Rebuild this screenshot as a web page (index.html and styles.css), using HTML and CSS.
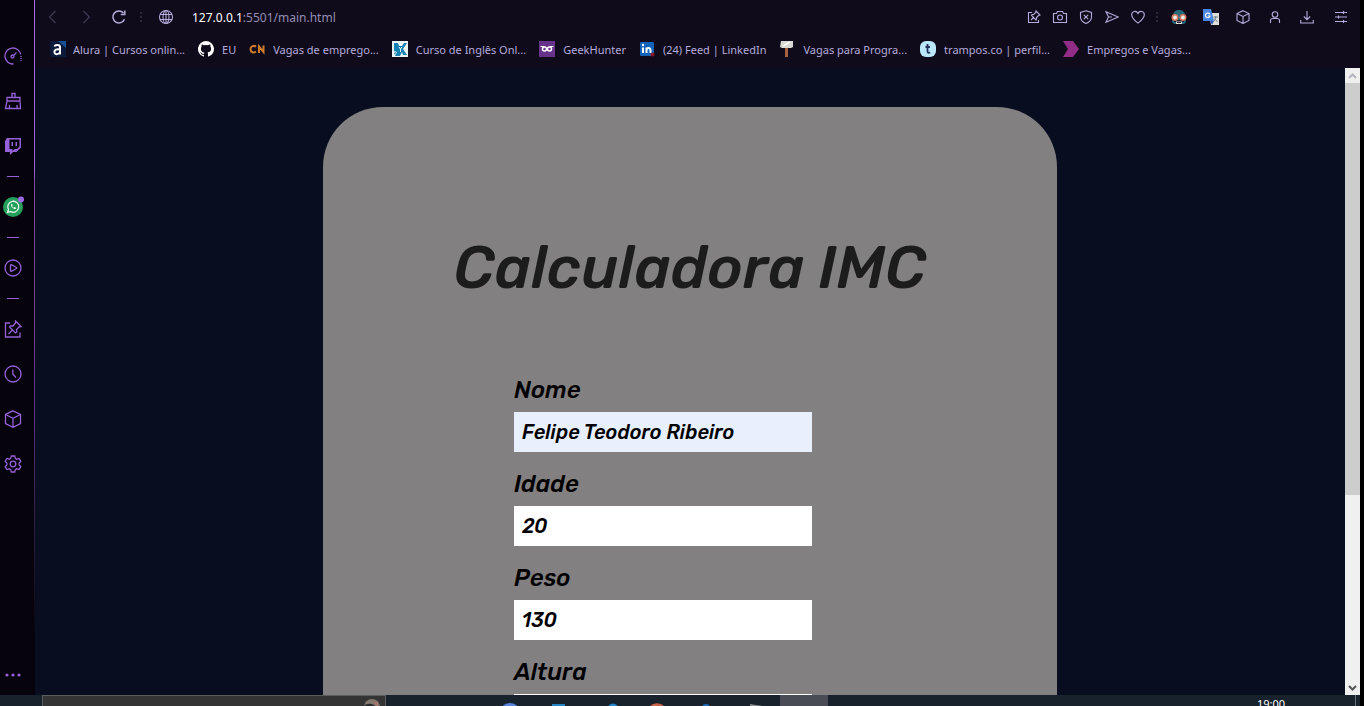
FILE: index.html
```html
<!DOCTYPE html>
<html lang="pt-BR">
<head>
<meta charset="utf-8">
<title>Calculadora IMC</title>
<link rel="stylesheet" href="styles.css">
</head>
<body>
<div class="screen">
  <div class="browser">
    <aside class="sidebar" aria-label="Barra lateral">
      <button class="side-btn" aria-label="Controle"><svg class="line" width="18" height="18" viewBox="0 0 18 18"><path d="M9.500 17A8 8 0 1 1 16.800 7.500"/><circle cx="8.500" cy="9.500" r="1.500"/><path d="M9.600 8.400L12.500 5.500"/><path d="M17 9v5" stroke-dasharray="1 1"/></svg></button>
      <button class="side-btn" aria-label="Limpeza"><svg class="line" width="18" height="18" viewBox="0 0 18 18"><path d="M3 5.500h13v3.500H3zM8 5.500v-4h3v4M3 9L1.500 16.500h15L16 9M5.500 13v3.500M13 13v3.500"/></svg></button>
      <button class="side-btn" aria-label="Twitch"><svg width="18" height="18" viewBox="0 0 18 18"><path fill="#9561d8" fill-rule="evenodd" d="M3 1h14v9.500L12.500 15H9l-3 3v-3H1V4zM5.500 2.500V12h3v2l2-2h2.500l2.500-2.500v-7zM7.500 5h1.500v4H7.500zM11.500 5H13v4h-1.500z"/></svg></button>
      <hr class="side-rule">
      <button class="side-btn" aria-label="WhatsApp"><svg width="22" height="22" viewBox="0 1 22 22"><circle cx="11" cy="12" r="10" fill="#24a05c"/><path d="M5.500 17.500l1-3a5.500 5.500 0 1 1 2 2z" fill="none" stroke="#eef8f0" stroke-width="1.300"/><path d="M9 9.300c-.5 2.500 2.500 5.300 5 4.700l-.2-1.500-1.500-.5-.8.700-1.500-1.500.7-.8-.5-1.300z" fill="#eef8f0"/><circle cx="19" cy="4.500" r="3" fill="#a06be8"/></svg></button>
      <hr class="side-rule">
      <button class="side-btn" aria-label="Player"><svg class="line" width="18" height="18" viewBox="0 0 18 18"><circle cx="9" cy="9" r="8"/><path d="M6.500 6.200c0-.5.400-.7.800-.5l5.200 2.800c.4.200.4.700 0 1l-5.200 2.800c-.4.200-.8 0-.8-.5z"/></svg></button>
      <hr class="side-rule">
      <button class="side-btn" aria-label="Pinboards"><svg class="line" width="18" height="18" viewBox="0 0 18 18"><path d="M6 3H1.500v14H16v-4.500M4.500 14l4-4M11.500 1l5.500 5.500-2 .5-2.500 2.500.3 2.500-1.300 1L5.500 7l1-1.200 2.500.2L11.500 3z"/></svg></button>
      <button class="side-btn" aria-label="Histórico"><svg class="line" width="18" height="18" viewBox="0 0 18 18"><circle cx="9" cy="9" r="8"/><path d="M8.800 4.500V9l3.200 3.500"/></svg></button>
      <button class="side-btn" aria-label="Extensões"><svg class="line" width="18" height="18" viewBox="0 0 18 18"><path d="M9 .8l7.500 3.700v9L9 17.300l-7.500-3.800v-9zM1.500 4.500L9 8.300l7.500-3.800M9 8.300v9"/></svg></button>
      <button class="side-btn" aria-label="Configurações"><svg class="line" width="18" height="18" viewBox="0 0 18 18"><circle cx="9" cy="9" r="2.800"/><path d="M7.300 1h3.400l.6 2.300 1.500.9 2.300-.7 1.700 3-1.700 1.600v1.800l1.700 1.600-1.700 3-2.300-.7-1.500.9-.6 2.300H7.300l-.6-2.300-1.500-.9-2.300.7-1.700-3 1.700-1.600V8.100L1.200 6.500l1.700-3 2.300.7 1.500-.9z"/></svg></button>
      <button class="side-btn side-more" aria-label="Mais"><svg width="18" height="4" viewBox="0 0 18 4" fill="#9561d8"><circle cx="3" cy="2" r="1.600"/><circle cx="9" cy="2" r="1.600"/><circle cx="15" cy="2" r="1.600"/></svg></button>
    </aside>

    <div class="main">
      <header class="chrome">
        <nav class="toolbar" aria-label="Navegação">
          <button class="nav-btn dim" aria-label="Voltar"><svg width="16" height="16" viewBox="0 0 16 16"><path d="M10.500 2L4.500 8l6 6"/></svg></button>
          <button class="nav-btn dim" aria-label="Avançar"><svg width="16" height="16" viewBox="0 0 16 16"><path d="M5.500 2l6 6-6 6"/></svg></button>
          <button class="nav-btn" aria-label="Recarregar"><svg width="16" height="16" viewBox="0 0 16 16"><path stroke-width="1.500" d="M13.500 10.200A6 6 0 1 1 12.500 4M13.800 1.500v4h-4"/></svg></button>
          <span class="grip"></span>
          <button class="site-btn" aria-label="Informações do site"><svg width="16" height="16" viewBox="0 0 16 16"><circle cx="8" cy="8" r="6.500"/><ellipse cx="8" cy="8" rx="3" ry="6.500"/><path d="M8 1.500v13M2 5.500h12M2 10.500h12"/></svg></button>
          <button class="address"><b>127.0.0.1</b>:5501/main.html</button>
          <button class="tool-btn" aria-label="Pinboard"><svg width="14" height="14" viewBox="0 0 14 14"><path d="M5 2.500H1.500v10h10V10M4 10l3-3M9 1l4 4-1.500.5-2 2V9L9 10 4.500 5.500 5 4.500h1.700l2-2z"/></svg></button>
          <button class="tool-btn" aria-label="Captura"><svg width="16" height="14" viewBox="0 0 16 14"><path d="M1.500 3.500h3l1-2h5l1 2h3v9h-13z"/><circle cx="8" cy="7.500" r="2.500"/></svg></button>
          <button class="tool-btn" aria-label="Bloqueador"><svg width="14" height="14" viewBox="0 0 14 14"><path d="M7 .8l5.500 1.700V7c0 3-2 5-5.500 6.500C3.500 12 1.500 10 1.500 7V2.500zM4.800 4.800l4.400 4.400M9.200 4.800L4.800 9.200"/></svg></button>
          <button class="tool-btn" aria-label="Enviar"><svg width="14" height="14" viewBox="0 0 14 14"><path d="M1 1.800L13.300 7 1 12.200 3.500 7zM3.500 7H7"/></svg></button>
          <button class="tool-btn" aria-label="Favorito"><svg width="14" height="14" viewBox="0 0 14 14"><path d="M7 13C4.500 11 .7 8.500.7 4.700c0-3.800 4.800-4.500 6.300-1.200 1.500-3.300 6.300-2.600 6.300 1.200C13.300 8.500 9.500 11 7 13z"/></svg></button>
          <span class="grip"></span>
          <button class="ext-btn" aria-label="Leitor"><svg class="art" width="16" height="16" viewBox="0 0 16 16"><path d="M2 8C2 3 4 1 8 1s6 2 6 7l1 5-2 2H3l-2-2z" fill="#246a7c"/><path d="M3 11h10v2H3z" fill="#201e35"/><path d="M5 12.500h6V15H5z" fill="#e7ddd5"/><path d="M6 13.500h4" stroke="#201e35"/><circle cx="4" cy="8.500" r="2.700" fill="#eee" stroke="#d2785b" stroke-width="1.500"/><circle cx="12" cy="8.500" r="2.700" fill="#eee" stroke="#d2785b" stroke-width="1.500"/></svg></button>
          <button class="ext-btn" aria-label="Tradutor"><svg class="art" width="16" height="16" viewBox="0 0 16 16"><path d="M6 4h10v12H8z" fill="#dedfda"/><path d="M0 0h8l3 12H0z" fill="#4a86e4"/><path d="M7 12h4l-2 4z" fill="#2f5cbb"/><path d="M6.800 5.200A2.300 2.300 0 1 0 7 7H5" fill="none" stroke="#fff" stroke-width="1.200"/><path d="M10.500 8h4.500M12.700 7v1c0 2-1 3.500-2 4.500M11.500 9.500l3 3.500" fill="none" stroke="#77808a"/></svg></button>
          <button class="ext-btn" aria-label="Extensões"><svg width="14" height="14" viewBox="0 0 14 14"><path d="M7 .7l6 2.800v7l-6 3-6-3v-7zM1 3.500l6 3 6-3M7 6.500v7"/></svg></button>
          <button class="ext-btn" aria-label="Perfil"><svg width="12" height="12" viewBox="0 0 12 12"><circle cx="6" cy="3.500" r="2.800"/><path d="M1.500 12V9.500C1.500 8 3 7.500 4 7.500h4c1 0 2.500.5 2.500 2V12"/></svg></button>
          <button class="ext-btn" aria-label="Downloads"><svg width="14" height="14" viewBox="0 0 14 14"><path d="M7 1v8.500M3.800 6.500L7 9.700l3.200-3.200M.7 10v3h12.600v-3"/></svg></button>
          <button class="menu-btn" aria-label="Menu"><svg width="14" height="14" viewBox="0 0 14 14"><path d="M1 2.500h12M1 7h12M1 11.500h12M9.500 1v3M4.500 5.500v3M9.500 10v3"/></svg></button>
        </nav>

        <nav class="bookmarks" aria-label="Favoritos">
          <a class="bookmark" href="#"><svg width="16" height="16" viewBox="0 0 16 16"><path d="M0 0h16v16H0z" fill="#0a1a38"/><path d="M8 0h8v7z" fill="#175092"/><path d="M4.500 5.500C5 3.500 10 3 10 6v7.500M10 8.500C7 8 4 8.500 4.500 11.500c.5 2.500 5 2 5.500-.5" fill="none" stroke="#fff" stroke-width="2"/></svg>Alura | Cursos onlin...</a>
          <a class="bookmark" href="#"><svg width="16" height="16" viewBox="0 0 16 16"><path fill="#fff" d="M8 0a8 8 0 0 0-2.500 15.600c.4.100.5-.2.500-.4v-1.400c-2.200.5-2.700-1-2.700-1-.4-.9-.9-1.100-.9-1.100-.7-.5.100-.5.100-.5.800.1 1.200.8 1.200.8.700 1.200 1.900.9 2.300.7.100-.5.300-.9.500-1.100-1.800-.2-3.600-.9-3.600-4 0-.8.300-1.600.8-2.100-.1-.2-.4-1 .1-2.100 0 0 .7-.2 2.200.8a7.700 7.700 0 0 1 4 0c1.500-1 2.200-.8 2.200-.8.400 1.100.2 1.900.1 2.100.5.600.8 1.300.8 2.100 0 3.100-1.900 3.700-3.600 3.900.3.300.5.800.5 1.500v2.200c0 .2.100.5.500.4A8 8 0 0 0 8 0z"/></svg>EU</a>
          <a class="bookmark" href="#"><svg width="16" height="16" viewBox="0 0 16 16" fill="none" stroke="#cf7c2b" stroke-width="2"><path d="M7 5.800C5 4 1.500 5 1.500 8.200s3.500 4.200 5.500 2.400M10 12V5.500l4.500 5.500V4.500"/></svg>Vagas de emprego...</a>
          <a class="bookmark" href="#"><svg width="16" height="16" viewBox="0 0 16 16"><path d="M0 0h16v16H0z" fill="#e9f5f8"/><path d="M2 2h4l1 3h3l2-3h3l-4 6 4 6h-4l-1-3-2 4H3l2-4-3-1zM2 12l2-1-1 3z" fill="#1683b5"/><path d="M7 6l1.500 2L10 6M8.500 8v3" fill="none" stroke="#e9f5f8"/></svg>Curso de Inglês Onl...</a>
          <a class="bookmark" href="#"><svg width="16" height="16" viewBox="0 0 16 16"><path d="M0 0h16v16H0z" fill="#67338a"/><path d="M1.500 5.500h4M10.500 5.500h4" stroke="#fff" stroke-width="1.200"/><circle cx="5.500" cy="8" r="2" fill="none" stroke="#fff" stroke-width="1.500"/><circle cx="10.500" cy="8" r="2" fill="none" stroke="#fff" stroke-width="1.500"/></svg>GeekHunter</a>
          <a class="bookmark" href="#"><svg width="16" height="16" viewBox="0 0 16 16"><rect x="1" y="1" width="14" height="14" rx="1" fill="#1262b7"/><path d="M4 6.500V12M7.500 12V6.500M7.500 9c0-2.500 4-3 4 0v3" fill="none" stroke="#fff" stroke-width="2"/><circle cx="4" cy="4" r="1.200" fill="#fff"/><circle cx="13.500" cy="13.500" r="2" fill="#8c1626"/></svg>(24) Feed | LinkedIn</a>
          <a class="bookmark" href="#"><svg width="16" height="16" viewBox="0 0 16 16"><path d="M6 6h3v10H6z" fill="#a4613e"/><path d="M2 0h12v6L12 7H3L1 6z" fill="#d8d9d3"/><path d="M4 5l7-4" stroke="#fff" stroke-width="2"/></svg>Vagas para Progra...</a>
          <a class="bookmark" href="#"><svg width="16" height="16" viewBox="0 0 16 16"><rect width="16" height="16" rx="6" fill="#b9e8fb"/><path d="M7.500 3v7c0 2 1 2 2.700 1.500M5.500 6H10" fill="none" stroke="#26315b" stroke-width="1.800"/></svg>trampos.co | perfil...</a>
          <a class="bookmark" href="#"><svg width="16" height="16" viewBox="0 0 16 16"><path d="M0 0h10l6 8-6 8H0l5-8z" fill="#922d87"/></svg>Empregos e Vagas...</a>
        </nav>
      </header>

      <div class="viewport">
        <main class="page">
          <section class="card">
            <h1 class="title">Calculadora IMC</h1>
            <form class="form">
              <div class="field"><label for="nome">Nome</label><input class="filled" id="nome" type="text" value="Felipe Teodoro Ribeiro"></div>
              <div class="field"><label for="idade">Idade</label><input id="idade" type="text" value="20"></div>
              <div class="field"><label for="peso">Peso</label><input id="peso" type="text" value="130"></div>
              <div class="field"><label for="altura">Altura</label><input id="altura" type="text"></div>
            </form>
          </section>
        </main>
        <div class="scrollbar">
          <button class="scroll-btn" aria-label="Subir"><svg width="9" height="6" viewBox="0 0 9 6"><path d="M1 5l3.500-3.500L8 5" stroke="#b5b4be"/></svg></button>
          <div class="track"><div class="thumb"></div></div>
          <button class="scroll-btn" aria-label="Descer"><svg width="9" height="6" viewBox="0 0 9 6"><path d="M1 1l3.500 3.500L8 1" stroke="#555"/></svg></button>
        </div>
      </div>
    </div>
  </div>

  <footer class="taskbar">
    <div class="search">
      <input type="text" aria-label="Pesquisar">
      <svg class="search-art" width="18" height="18" viewBox="0 0 18 18"><circle cx="9" cy="9" r="8" fill="#82766d"/><path d="M1 8c3-3 9-3 12 1v9H1z" fill="#29282b"/><path d="M4 9c3-2 6-1 8 1v8H4z" fill="#a98d8b"/><path d="M10 4h5v5z" fill="#a8726d"/></svg>
    </div>
    <div class="tasks">
      <button class="task" aria-label="Discord"><svg width="22" height="22" viewBox="0 0 22 22"><circle cx="11" cy="11" r="11" fill="#5b85dc"/></svg></button>
      <button class="task" aria-label="Janela"><svg width="22" height="22" viewBox="0 0 22 22"><path d="M4 1h13v20H4z" fill="#2585c4"/></svg></button>
      <button class="task" aria-label="Editor"><svg width="22" height="22" viewBox="0 0 22 22"><path d="M11 3q5-5 10 0v19H11z" fill="#2688cf"/></svg></button>
      <button class="task" aria-label="Opera GX"><svg width="22" height="22" viewBox="0 0 22 22"><circle cx="11" cy="11" r="9.500" fill="#33252b" stroke="#c8634c" stroke-width="2.500"/><path d="M6 5l4-2 4 2" stroke="#dc7b59" stroke-width="2" fill="none"/></svg></button>
      <button class="task" aria-label="Código"><svg width="22" height="22" viewBox="0 0 22 22"><path d="M6 4q5-6 10 0v18H6z" fill="#1f6fbe"/></svg></button>
      <button class="task" aria-label="Terminal"><svg width="22" height="22" viewBox="0 0 22 22"><path d="M6 1l13 2v19H6z" fill="#878a8d"/><path d="M8 4l11 1v17H8z" fill="#373d45"/></svg></button>
      <button class="task active" aria-label="Gravador"></button>
    </div>
    <time class="clock">19:00</time>
    <button class="desktop-btn" aria-label="Mostrar área de trabalho"></button>
  </footer>
</div>
</body>
</html>
```
FILE: styles.css
```css
* { box-sizing: border-box; }

body {
  margin: 0;
  background: #000;
  font-family: "Noto Sans", "Open Sans", sans-serif;
}

button {
  margin: 0;
  padding: 0;
  border: 0;
  background: none;
  color: inherit;
  font: inherit;
}

svg { display: block; flex: none; }

.screen {
  display: grid;
  grid-template-rows: minmax(0, 1fr) 11px;
  height: 100vh;
  padding-right: 4px;
}

.browser {
  display: grid;
  grid-template-columns: 35px minmax(0, 1fr);
  min-height: 0;
}

/* Sidebar */
.sidebar {
  display: flex;
  flex-direction: column;
  padding: 33px 8px 0 0;
  background: #06030c;
  border-right: 1px solid;
  border-image: linear-gradient(#a66ff0 0, #9561d8 25%, #7b4a9c 26%, #71418f 45%, #573187 60%, #3d2756 70%, #06030c 92%) 1;
}

.side-btn {
  display: flex;
  flex: none;
  align-items: center;
  justify-content: center;
  height: 45px;
}

.side-more { height: 40px; margin-top: auto; }

.line { fill: none; stroke: #9561d8; stroke-width: 1.3; }

.side-rule {
  flex: none;
  width: 12px;
  height: 1px;
  margin: 8px auto 7px;
  border: 0;
  background: #9561d8;
}

/* Browser chrome */
.main {
  display: flex;
  flex-direction: column;
  min-width: 0;
  min-height: 0;
}

.chrome { padding-bottom: 4px; background: #0f0b1a; color: #b4acdc; }

.toolbar {
  display: flex;
  height: 34px;
  padding: 0 1px;
}

.toolbar button { display: flex; align-items: center; justify-content: center; }

.toolbar svg:not(.art) { fill: none; stroke: #b4acdc; stroke-width: 1.1; }

.toolbar .nav-btn { width: 33px; }
.toolbar .dim svg { stroke: #403b54; }
.toolbar .site-btn { width: 38px; }
.toolbar .tool-btn { width: 26px; }
.toolbar .ext-btn { width: 32px; }
.toolbar .menu-btn { width: 36px; }

.toolbar .address {
  flex: 1;
  justify-content: flex-start;
  padding-left: 7px;
  font-size: 12px;
  color: #958eb2;
}

.address b { font-weight: 400; color: #fff; }

.grip {
  width: 12px;
  height: 12px;
  margin: auto 0;
  background: radial-gradient(circle, #2c2839 1px, transparent 1px) center / 4px 4px;
  background-repeat: repeat-y;
}

.bookmarks {
  display: flex;
  gap: 13px;
  height: 30px;
  padding-left: 15px;
}

.bookmark {
  display: flex;
  align-items: center;
  gap: 7px;
  font-size: 11px;
  color: #b4acdc;
  text-decoration: none;
  white-space: nowrap;
}

.bookmark + .bookmark { gap: 8px; }

/* Page */
.viewport {
  display: grid;
  grid-template-columns: minmax(0, 1fr) 15px;
  flex: 1;
  min-height: 0;
}

.page {
  min-height: 0;
  padding-top: 39px;
  overflow: hidden;
  background: #080d20;
}

.card {
  width: 56%;
  min-height: 900px;
  margin: 0 auto;
  padding-top: 124px;
  border-radius: 60px;
  background: #838081;
  font-family: Rubik, Roboto, sans-serif;
  font-style: italic;
  font-weight: 500;
}

.title {
  margin: 0 0 69px;
  font-size: 60px;
  font-weight: 500;
  line-height: 74px;
  color: #1c1c1c;
  text-align: center;
}

.form {
  display: grid;
  gap: 16px;
  margin-left: 26%;
}

.field {
  display: flex;
  flex-direction: column;
  align-items: flex-start;
  gap: 6px;
}

.field label { font-size: 24px; line-height: 32px; color: #000; }

.field input {
  width: 298px;
  height: 40px;
  padding: 0 8px;
  border: 0;
  border-radius: 0;
  background: #fff;
  color: #000;
  font: inherit;
  font-size: 20px;
}

.field .filled { background: #e8f0fe; }

/* Scrollbar */
.scrollbar { display: flex; flex-direction: column; background: #f0f0f0; }

.scroll-btn {
  display: flex;
  align-items: center;
  justify-content: center;
  height: 15px;
}

.scroll-btn path { fill: none; stroke-width: 2; }

.track { flex: 1; }
.thumb { height: 69%; background: #cdcdcd; }

/* Taskbar */
.taskbar {
  display: flex;
  min-height: 0;
  overflow: hidden;
  padding-left: 42px;
  background: #18222d;
}

.search { position: relative; width: 344px; height: 40px; margin-right: 100px; }

.search input {
  width: 100%;
  height: 100%;
  border: 1px solid #5b5c5d;
  background: #333433;
}

.search-art { position: absolute; top: 3px; right: 5px; }

.tasks { display: flex; gap: 1px; }

.task {
  display: flex;
  align-items: flex-start;
  justify-content: center;
  width: 48px;
  height: 40px;
  padding-top: 8px;
}

.task.active { background: #4a4c55; }

.clock {
  margin-left: auto;
  padding-top: 2px;
  font-size: 11px;
  line-height: 14px;
  color: #fff;
}

.desktop-btn {
  width: 5px;
  height: 40px;
  margin-left: 70px;
  border-left: 1px solid #6a7077;
}
```
